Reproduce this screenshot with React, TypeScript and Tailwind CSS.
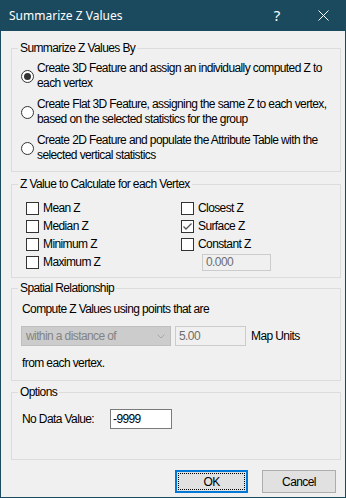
import React from "react";

const sans = "font-['Liberation_Sans',Arial,sans-serif]";

const Group: React.FC<{ title: string; className?: string; children: React.ReactNode }> = ({
  title,
  className = "",
  children,
}) => (
  <fieldset className={`ml-[10px] w-[330px] border border-[#dcdcdc] ${className}`}>
    <legend className="ml-[6px] px-[2px] leading-[14px]">{title}</legend>
    {children}
  </fieldset>
);

const Radio: React.FC<{ checked?: boolean; lines: string[] }> = ({ checked, lines }) => (
  <div className="flex items-center">
    <span className="flex h-[13px] w-[13px] shrink-0 items-center justify-center rounded-full border border-[#333333] bg-white">
      {checked && <span className="h-[7px] w-[7px] rounded-full bg-[#333333]" />}
    </span>
    <div className="ml-[3px] leading-[15px]">
      {lines.map((l) => (
        <div key={l} className="whitespace-nowrap">
          {l}
        </div>
      ))}
    </div>
  </div>
);

const Check: React.FC<{ label: string; checked?: boolean }> = ({ label, checked }) => (
  <div className="flex h-[18px] items-center">
    <span className="flex h-[13px] w-[13px] shrink-0 items-center justify-center border border-[#333333] bg-white">
      {checked && (
        <svg width="11" height="11" viewBox="0 0 11 11">
          <path d="M1.5 5.5 L4 8 L9.5 2.5" stroke="#555555" strokeWidth="1.3" fill="none" />
        </svg>
      )}
    </span>
    <span className="ml-[4px] leading-[15px]">{label}</span>
  </div>
);

export default function App() {
  return (
    <div
      className={`flex h-[498px] w-[346px] flex-col overflow-hidden bg-[#1b4a5e] text-[12px] tracking-[-0.6px] text-black ${sans}`}
    >
      {/* title bar */}
      <div className="flex h-[31px] shrink-0 items-center tracking-normal text-white">
        <span className="ml-[9px] flex-1 font-['Noto_Sans',sans-serif] text-[12px]">Summarize Z Values</span>
        <span className="flex w-[46px] justify-center font-['Noto_Sans',sans-serif] text-[15px]">?</span>
        <span className="flex w-[46px] justify-center">
          <svg width="11" height="11" viewBox="0 0 11 11">
            <path d="M0.5 0.5 L10.5 10.5 M10.5 0.5 L0.5 10.5" stroke="white" strokeWidth="1" />
          </svg>
        </span>
      </div>

      {/* client area */}
      <div className="mx-[1px] mb-[1px] flex flex-1 flex-col bg-[#f0f0f0] pt-[10px]">
        <Group title="Summarize Z Values By">
          <div className="flex flex-col gap-[6px] pb-[8px] pl-[9px] pt-[6px]">
            <Radio checked lines={["Create 3D Feature and assign an individually computed Z to", "each vertex"]} />
            <Radio lines={["Create Flat 3D Feature, assigning the same Z to each vertex,", "based on the selected statistics for the group"]} />
            <Radio lines={["Create 2D Feature and populate the Attribute Table with the", "selected vertical statistics"]} />
          </div>
        </Group>

        <Group title="Z Value to Calculate for each Vertex" className="mt-[5px]">
          <div className="grid grid-cols-[155px_1fr] pb-[6px] pl-[14px] pt-[8px]">
            <div className="flex flex-col">
              <Check label="Mean Z" />
              <Check label="Median Z" />
              <Check label="Minimum Z" />
              <Check label="Maximum Z" />
            </div>
            <div className="flex flex-col">
              <Check label="Closest Z" />
              <Check label="Surface Z" checked />
              <Check label="Constant Z" />
              <div className="flex h-[18px] items-center pl-[21px]">
                <div className="flex h-[17px] w-[69px] items-center border border-[#cccccc] bg-[#f0f0f0] pl-[3px] text-[#6d6d6d]">
                  0.000
                </div>
              </div>
            </div>
          </div>
        </Group>

        <Group title="Spatial Relationship" className="mt-[3px]">
          <div className="pb-[9px] pl-[9px] pt-[7px]">
            <div className="pl-[1px] leading-[15px]">Compute Z Values using points that are</div>
            <div className="mt-[9px] flex items-center">
              <div className="flex h-[20px] w-[150px] items-center justify-between border border-[#bfbfbf] bg-[#cccccc] pl-[4px] pr-[5px] text-[#838383]">
                <span>within a distance of</span>
                <svg width="8" height="5" viewBox="0 0 8 5">
                  <path d="M0.5 0.5 L4 4 L7.5 0.5" stroke="#a8a8a8" strokeWidth="1" fill="none" />
                </svg>
              </div>
              <div className="ml-[4px] flex h-[20px] w-[71px] items-center border border-[#cccccc] bg-[#f0f0f0] pl-[3px] text-[#6d6d6d]">
                5.00
              </div>
              <span className="ml-[5px]">Map Units</span>
            </div>
            <div className="mt-[10px] pl-[1px] leading-[15px]">from each vertex.</div>
          </div>
        </Group>

        <Group title="Options" className="mt-[4px] h-[75px]">
          <div className="flex items-center pl-[10px] pt-[10px]">
            <span className="w-[88px]">No Data Value:</span>
            <div className="flex h-[20px] w-[62px] items-center border border-[#7a7a7a] bg-white pl-[2px]">-9999</div>
          </div>
        </Group>

        <div className="mt-[10px] flex justify-end gap-[14px] pr-[9px]">
          <button className="h-[23px] w-[73px] border-2 border-[#0078d7] bg-[#e1e1e1] outline-1 outline-offset-[-4px] outline-dotted outline-black">
            OK
          </button>
          <button className="h-[23px] w-[74px] border border-[#adadad] bg-[#e1e1e1]">Cancel</button>
        </div>
      </div>
    </div>
  );
}
